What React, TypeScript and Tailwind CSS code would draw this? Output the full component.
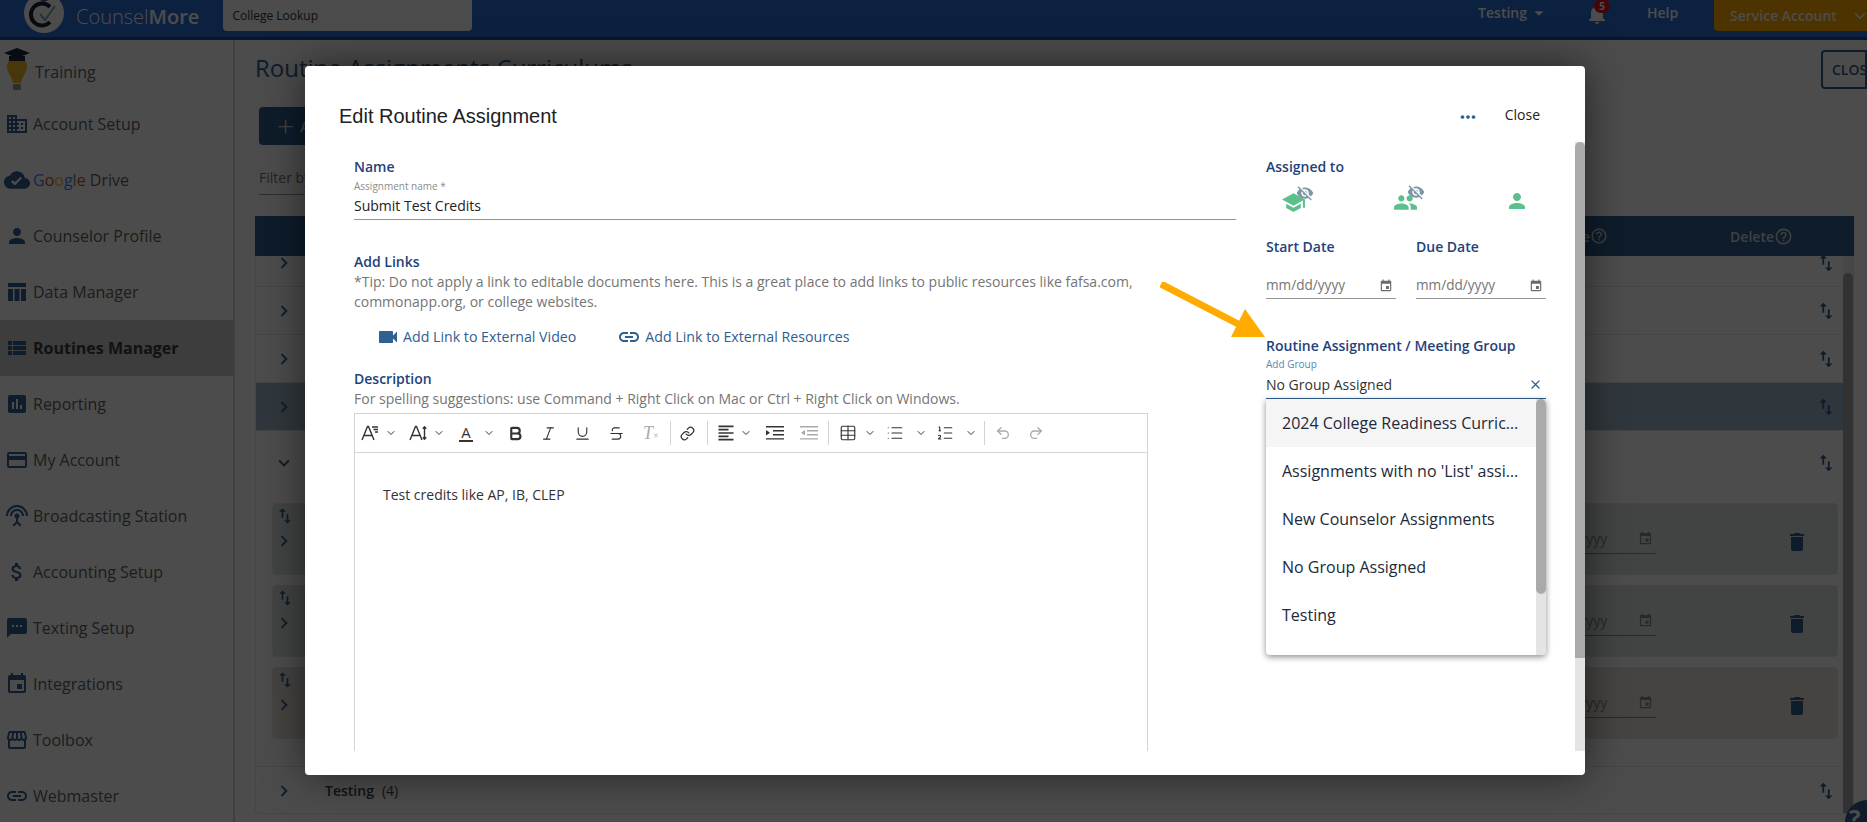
import type { ReactNode } from "react";
import { Bold, ChevronDown, Italic, Link, List, ListOrdered, Redo2, Strikethrough, Table, Underline, Undo2 } from "lucide-react";
import {
	MdArrowDropDown,
	MdAssessment,
	MdAttachMoney,
	MdBusiness,
	MdChevronRight,
	MdClose,
	MdCloudDone,
	MdCreditCard,
	MdDelete,
	MdEvent,
	MdExpandMore,
	MdFormatAlignLeft,
	MdHelpOutline,
	MdLink,
	MdMoreHoriz,
	MdNotifications,
	MdOutlineStorefront,
	MdPeople,
	MdPerson,
	MdSchool,
	MdSettingsInputAntenna,
	MdSms,
	MdSwapVert,
	MdVideocam,
	MdViewList,
	MdVisibilityOff,
} from "react-icons/md";

function SideItem({ icon, children, active }: { icon: ReactNode; children: ReactNode; active?: boolean }) {
	return (
		<div className={`h-14 flex items-center ${active ? "bg-[#cbcbcb] font-bold text-[#3d3d3d]" : "text-[#636363]"}`}>
			<span className="w-[33px] flex justify-center text-[#2f6090] shrink-0 pl-[1px]">{icon}</span>
			<span>{children}</span>
		</div>
	);
}

function DataIcon() {
	return (
		<svg viewBox="0 0 20 20" className="w-[20px] h-[20px]" fill="currentColor">
			<path d="M1 1h18v4H1zM1 7h5v12H1zM7.5 7h5v12h-5zM14 7h5v12h-5z" />
		</svg>
	);
}

function Sidebar() {
	return (
		<div className="w-[233px] shrink-0 bg-white border-r-2 border-[#d8d8d8] box-content text-[16px]">
			<div className="h-14 flex items-center text-[#636363]">
				<svg viewBox="0 0 28 46" className="w-[28px] h-[46px] ml-[3px] mt-[4px] shrink-0">
					<path d="M14 10c6 0 10 4 10 10 0 6-5 9-6 16h-8C9 29 4 26 4 20c0-6 4-10 10-10z" fill="#f4b82a" />
					<rect x="10" y="37" width="8" height="6" rx="1" fill="#9a9a9a" />
					<path d="M1 6l13-5 13 5-13 5z" fill="#1d2b3a" />
					<path d="M6 9h16v5H6z" fill="#1d2b3a" />
				</svg>
				<span className="ml-[4px] mt-2">Training</span>
			</div>
			<SideItem icon={<MdBusiness size={24} />}>Account Setup</SideItem>
			<div className="h-14 flex items-center text-[#636363]">
				<span className="w-[33px] flex justify-center text-[#2f6090] shrink-0">
					<MdCloudDone size={26} />
				</span>
				<span>
					<span className="text-[#4285f4]">G</span>
					<span className="text-[#ea4335]">o</span>
					<span className="text-[#fbbc05]">o</span>
					<span className="text-[#4285f4]">g</span>
					<span className="text-[#34a853]">l</span>
					<span className="text-[#ea4335]">e</span> Drive
				</span>
			</div>
			<SideItem icon={<MdPerson size={24} />}>Counselor Profile</SideItem>
			<SideItem icon={<DataIcon />}>Data Manager</SideItem>
			<SideItem active icon={<MdViewList size={24} />}>
				Routines Manager
			</SideItem>
			<SideItem icon={<MdAssessment size={24} />}>Reporting</SideItem>
			<SideItem icon={<MdCreditCard size={24} />}>My Account</SideItem>
			<SideItem icon={<MdSettingsInputAntenna size={24} />}>Broadcasting Station</SideItem>
			<SideItem icon={<MdAttachMoney size={24} />}>Accounting Setup</SideItem>
			<SideItem icon={<MdSms size={24} />}>Texting Setup</SideItem>
			<SideItem icon={<MdEvent size={24} />}>Integrations</SideItem>
			<SideItem icon={<MdOutlineStorefront size={24} />}>Toolbox</SideItem>
			<SideItem icon={<MdLink size={24} />}>Webmaster</SideItem>
		</div>
	);
}

function GroupRow({ className, children, down }: { className: string; children?: ReactNode; down?: boolean }) {
	return (
		<div className={`flex items-center pl-[17px] pr-[6px] border-b border-[#e6e6e6] text-[#2f6090] ${className}`}>
			{down ? <MdExpandMore size={22} /> : <MdChevronRight size={22} />}
			<div className="flex-1 text-[#444] text-[14px] pl-[30px]">{children}</div>
			<MdSwapVert size={22} />
		</div>
	);
}

function SubRow({ tint }: { tint: string }) {
	return (
		<div className={`h-[72px] ml-[16px] mr-[5px] mb-[10px] rounded flex border border-[#e6e6e6] ${tint}`}>
			<div className="w-[24px] text-[#2f6090]">
				<div className="h-[23px] border border-[#ddd] rounded flex items-center justify-center">
					<MdSwapVert size={20} />
				</div>
				<MdChevronRight size={22} className="mt-[3px]" />
			</div>
			<div className="flex-1 flex justify-end items-center">
				<div className="w-[130px] h-[30px] flex items-center justify-between border-b border-[#8a8a8a] text-[#8a8a8a] text-[14px]">
					mm/dd/yyyy
					<MdEvent size={15} className="mr-[3px]" />
				</div>
				<div className="w-[181px] flex justify-end pr-[28px] mt-[6px] text-[#2f6090]">
					<MdDelete size={24} />
				</div>
			</div>
		</div>
	);
}

function Background() {
	return (
		<div className="flex-1 min-h-0 flex">
			<Sidebar />
			<div className="flex-1 min-w-0 pl-[20px] pr-[13px] bg-white relative">
				<div className="h-[176px] relative">
					<div className="pt-[10px] text-[24px] text-[#2f6090] leading-9">Routine Assignments Curriculums</div>
					<div className="mt-[21px] ml-[4px] w-[150px] h-[38px] rounded bg-[#2f6090] text-[#ddd] flex items-center pl-[18px] text-[14px] font-semibold">
						<span className="text-[30px] font-light leading-none mr-[6px]">+</span>Add
					</div>
					<div className="mt-[18px] ml-[4px] w-[300px] h-[32px] border-b border-[#999] text-[14px] text-[#777] leading-[30px]">
						Filter by
					</div>
					<div className="absolute right-[-13px] top-[10px] w-[46px] h-[39px] border-2 border-[#2f6090] rounded-l overflow-hidden text-[#2f6090] text-[14px] font-semibold flex items-center pl-[9px]">
						CLOSE
					</div>
				</div>
				<div className="h-10 bg-[#2f6090] text-[#cfd6dd] text-[14px] font-semibold flex items-center justify-end pr-[61px]">
					<span>Date</span>
					<MdHelpOutline size={18} />
					<span className="ml-[122px]">Delete</span>
					<MdHelpOutline size={19} />
				</div>
				<div className="h-[558px] overflow-hidden flex border-x border-b border-[#e6e6e6] rounded-b">
					<div className="flex-1 min-w-0 -mt-[17px]">
						<GroupRow className="h-[48px]" />
						<GroupRow className="h-[48px]" />
						<GroupRow className="h-[48px]" />
						<GroupRow className="h-[48px] bg-[#a0b8c8]" />
						<GroupRow down className="h-[64px] border-b-0" />
						<div className="h-[8px]" />
						<SubRow tint="bg-[#dbe3e2]" />
						<SubRow tint="bg-[#dbe3e2]" />
						<SubRow tint="bg-[#ecdfda]" />
						<div className="h-[18px] border-b border-[#e6e6e6]" />
						<GroupRow className="h-[47px] border-b-0">
							<span className="font-semibold">Testing</span>
							<span className="ml-[8px]">(4)</span>
						</GroupRow>
					</div>
					<div className="w-[10px] shrink-0 bg-[#efefef] pt-[17px]">
						<div className="h-full rounded-t-full bg-[#a8a8a8]" />
					</div>
				</div>
			</div>
		</div>
	);
}

function TopBar() {
	return (
		<div className="h-10 shrink-0 bg-[#2b6bd5] border-b-[3px] border-[#1d4a96] flex items-start text-white overflow-hidden">
			<svg viewBox="0 0 42 42" className="w-[42px] h-[42px] ml-[23px] -mt-[8px] shrink-0">
				<circle cx="21" cy="21" r="20" fill="#ffffff" />
				<path d="M12 6l9-4 9 4-9 4z" fill="#2f6090" />
				<path d="M27 15a11 11 0 1 0 0 15" fill="none" stroke="#1c2430" strokeWidth="4" />
				<path d="M17 22l5 6 10-14" fill="none" stroke="#7da7c7" strokeWidth="2" />
			</svg>
			<div className="ml-[11px] mt-[1px] text-[20px] leading-8 font-light">
				Counsel<span className="font-semibold">More</span>
			</div>
			<div className="ml-[24px] w-[249px] h-[31px] bg-white rounded-b text-[#333] text-[12px] flex items-center pl-[9px]">College Lookup</div>
			<div className="ml-auto flex items-center text-[14px] h-[25px] font-semibold">
				Testing
				<MdArrowDropDown size={22} className="ml-[1px]" />
			</div>
			<div className="relative ml-[35px] mt-[2px]">
				<MdNotifications size={24} />
				<span className="absolute -top-[3px] left-[9px] w-[16px] h-[14px] rounded-full bg-[#e8101c] text-[10px] font-bold leading-[14px] text-center">5</span>
			</div>
			<div className="ml-[38px] w-[67px] text-[14px] leading-[26px] font-semibold">Help</div>
			<div className="w-[153px] h-[31px] bg-[#ffab00] rounded-bl flex items-center pl-[16px] text-[14px] font-semibold whitespace-nowrap">
				Service Account
				<ChevronDown size={18} className="ml-[14px] shrink-0" />
			</div>
		</div>
	);
}

function TitleField({ label, children }: { label: string; children?: ReactNode }) {
	return (
		<div>
			<div className="text-[14px] leading-5 font-semibold text-[#1f4279]">{label}</div>
			{children}
		</div>
	);
}

function DateField() {
	return (
		<div className="w-[130px] h-[27px] flex items-center justify-between border-b border-[#949494] text-[#757575] text-[13.6px]">
			mm/dd/yyyy
			<MdEvent size={14} className="mr-[3px] mt-[2px] text-[#6b6b6b]" />
		</div>
	);
}

function FontIcon({ lines }: { lines: "style" | "height" }) {
	return (
		<svg viewBox="0 0 18 18" className="w-[18px] h-[18px] text-[#333]" fill="none" stroke="currentColor" strokeWidth="1.4">
			<path d="M1 16L6.5 2.5h1L13 16M3.2 11.5h7.6" />
			{lines === "style" ? <path d="M11 3h6M12.5 5.5h4.5M14 8h3" /> : <path d="M15.5 3v12M13.8 4.8l1.7-2 1.7 2M13.8 13.2l1.7 2 1.7-2" />}
		</svg>
	);
}

function IndentIcon({ out }: { out?: boolean }) {
	return (
		<svg viewBox="0 0 18 14" className={`w-[18px] h-[14px] ${out ? "text-[#aaa]" : "text-[#333]"}`} fill="currentColor" stroke="none">
			<path d="M0 0h18v1.4H0zM7 4h11v1.4H7zM7 8h11v1.4H7zM0 12.2h18v1.4H0z" />
			{out ? <path d="M5 4v5.5L1 6.8z" /> : <path d="M0 4v5.5l4-2.7z" />}
		</svg>
	);
}

function Toolbar() {
	const chev = "w-3 h-3 text-[#333] shrink-0";
	const divider = "w-px h-[24px] bg-[#d4d4d4] shrink-0";
	return (
		<div className="h-[39px] border-b border-[#d4d4d4] flex items-center text-[#333]">
			<span className="ml-[6px]">
				<FontIcon lines="style" />
			</span>
			<ChevronDown className={`${chev} ml-[6px]`} />
			<span className="ml-[12px]">
				<FontIcon lines="height" />
			</span>
			<ChevronDown className={`${chev} ml-[6px]`} />
			<span className="ml-[14px] w-[14px] border-b-2 border-[#333] text-[15px] leading-[16px] text-center">A</span>
			<ChevronDown className={`${chev} ml-[10px]`} />
			<Bold size={17} strokeWidth={3} className="ml-[12px]" />
			<Italic size={17} strokeWidth={1.6} className="ml-[16px]" />
			<Underline size={17} strokeWidth={1.6} className="ml-[17px]" />
			<Strikethrough size={17} strokeWidth={1.6} className="ml-[17px]" />
			<span className="ml-[18px] w-[18px] text-[18px] leading-none italic text-[#aaa] font-['Liberation_Serif',serif]">
				T<span className="text-[10px] not-italic">×</span>
			</span>
			<span className={`${divider} ml-[9px]`} />
			<Link size={15} className="ml-[9px]" />
			<span className={`${divider} ml-[12px]`} />
			<MdFormatAlignLeft size={20} className="ml-[8px]" />
			<ChevronDown className={`${chev} ml-[4px]`} />
			<span className="ml-[14px]">
				<IndentIcon />
			</span>
			<span className="ml-[16px]">
				<IndentIcon out />
			</span>
			<span className={`${divider} ml-[10px]`} />
			<Table size={18} strokeWidth={1.5} className="ml-[10px]" />
			<ChevronDown className={`${chev} ml-[7px]`} />
			<List size={18} strokeWidth={1.5} className="ml-[10px]" />
			<ChevronDown className={`${chev} ml-[11px]`} />
			<ListOrdered size={18} strokeWidth={1.5} className="ml-[9px]" />
			<ChevronDown className={`${chev} ml-[11px]`} />
			<span className={`${divider} ml-[7px]`} />
			<Undo2 size={16} className="ml-[10px] text-[#aaa]" />
			<Redo2 size={16} className="ml-[17px] text-[#aaa]" />
		</div>
	);
}

function HiddenIcon({ className, icon, eyeClass }: { className: string; icon: ReactNode; eyeClass: string }) {
	return (
		<div className={`relative h-[28px] pt-[4px] text-[#5cc08c] ${className}`}>
			{icon}
			<MdVisibilityOff size={18} className={`absolute text-[#7d96a3] ${eyeClass}`} />
		</div>
	);
}

function GroupDropdown() {
	const options = ["2024 College Readiness Curriculum", "Assignments with no 'List' assigned", "New Counselor Assignments", "No Group Assigned", "Testing"];
	return (
		<div className="absolute left-0 top-full w-[280px] h-[256px] bg-white rounded-b shadow-[0_2px_6px_rgba(0,0,0,0.45)] flex overflow-hidden z-10">
			<div className="flex-1 min-w-0">
				{options.map((o, i) => (
					<div key={o} className={`h-12 flex items-center pl-4 pr-[12px] text-[16px] text-[#1c2a3a] ${i === 0 ? "bg-[#f5f5f5]" : ""}`}>
						<span className="truncate">{o}</span>
					</div>
				))}
			</div>
			<div className="w-[10px] shrink-0 bg-[#e4e4e4]">
				<div className="h-[195px] bg-[#aaaaaa] rounded-full" />
			</div>
		</div>
	);
}

function EditModal() {
	return (
		<div className="absolute left-[305px] top-[66px] w-[1280px] h-[709px] bg-white rounded shadow-[0_0_40px_rgba(0,0,0,0.55)] flex flex-col overflow-hidden">
			<div className="h-[76px] shrink-0 flex items-start pl-[34px]">
				<div className="mt-[38px] text-[20px] leading-6 text-[#212121] font-['Liberation_Sans',sans-serif]">Edit Routine Assignment</div>
				<MdMoreHoriz size={22} className="ml-auto mt-[40px] text-[#2f6090]" />
				<div className="ml-[26px] mr-[45px] mt-[39px] text-[14px] leading-5 text-[#212121]">Close</div>
			</div>
			<div className="flex-1 min-h-0 flex items-start">
				<div className="flex-1 h-[609px] overflow-hidden flex pl-[49px] pt-[15px] relative">
					<div className="w-[882px] shrink-0">
						<TitleField label="Name">
							<div className="mt-[2px] text-[10px] leading-[14px] text-[#8c8c8c]">Assignment name *</div>
							<div className="mt-[3px] pb-[3px] border-b border-[#949494] text-[14px] leading-5 text-[#212121]">Submit Test Credits</div>
						</TitleField>
						<div className="mt-[32px]">
							<TitleField label="Add Links">
								<div className="text-[14px] leading-5 text-[#757575]">
									*Tip: Do not apply a link to editable documents here. This is a great place to add links to public resources like fafsa.com,
									<br />
									commonapp.org, or college websites.
								</div>
							</TitleField>
						</div>
						<div className="mt-[13px] flex items-center text-[14.2px] leading-5 text-[#2f6090] pl-[22px]">
							<MdVideocam size={24} className="mr-[3px]" />
							Add Link to External Video
							<MdLink size={24} className="ml-[41px] mr-[4px]" />
							Add Link to External Resources
						</div>
						<div className="mt-[20px]">
							<TitleField label="Description">
								<div className="text-[14px] leading-5 text-[#757575]">For spelling suggestions: use Command + Right Click on Mac or Ctrl + Right Click on Windows.</div>
							</TitleField>
						</div>
						<div className="mt-[4px] w-[794px] h-[400px] border border-[#d4d4d4]">
							<Toolbar />
							<div className="pl-[28px] pt-[32px] text-[14px] leading-5 text-[#333]">Test credits like AP, IB, CLEP</div>
						</div>
					</div>
					<div className="ml-[30px] w-[280px] shrink-0">
						<TitleField label="Assigned to" />
						<div className="mt-[9px] flex items-start">
							<HiddenIcon
								className="ml-[15px] w-[33px]"
								eyeClass="left-[15px] -top-[2px]"
								icon={<MdSchool size={25} />}
							/>
							<HiddenIcon
								className="ml-[79px] w-[33px]"
								eyeClass="left-[14px] -top-[3px]"
								icon={<MdPeople size={25} />}
							/>
							<div className="ml-[79px] mt-[3px] h-[24px] text-[#5cc08c]">
								<MdPerson size={24} />
							</div>
						</div>
						<div className="mt-[23px] flex">
							<div className="w-[150px]">
								<TitleField label="Start Date" />
							</div>
							<TitleField label="Due Date" />
						</div>
						<div className="mt-[15px] flex gap-5">
							<DateField />
							<DateField />
						</div>
						<div className="mt-[37px]">
							<TitleField label="Routine Assignment / Meeting Group" />
						</div>
						<div className="text-[10px] leading-[15px] mt-[1px] text-[#5a87b5]">Add Group</div>
						<div className="relative">
							<div className="h-[27px] pb-[1px] flex items-center justify-between border-b border-[#2f6090] text-[14px] text-[#333]">
								No Group Assigned
								<MdClose size={15} className="mr-[3px] text-[#2f6090]" />
							</div>
							<GroupDropdown />
						</div>
					</div>
					<svg viewBox="0 0 106 56" className="absolute left-[855px] top-[140px] w-[106px] h-[56px]">
						<path d="M1 2L82 44" stroke="#ffab00" strokeWidth="7" />
						<path d="M85 27L105 55H71z" fill="#ffab00" />
					</svg>
				</div>
				<div className="w-[10px] h-[609px] shrink-0 bg-[#e4e4e4]">
					<div className="h-[516px] bg-[#aaaaaa] rounded-t-full rounded-b" />
				</div>
			</div>
		</div>
	);
}

export default function App() {
	return (
		<div className="relative w-screen h-screen overflow-hidden font-['Open_Sans',sans-serif]">
			<div className="h-full flex flex-col">
				<TopBar />
				<Background />
			</div>
			<div className="absolute -right-[22px] -bottom-[26px] w-[44px] h-[48px] rounded-full bg-[#2f6090] text-white text-[24px] font-bold pl-[4px]">?</div>
			<div className="absolute inset-0 bg-black/70" />
			<EditModal />
		</div>
	);
}
